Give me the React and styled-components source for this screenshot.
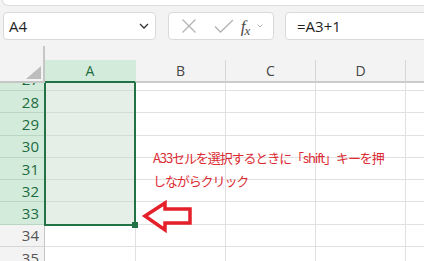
import React from "react";
import styled, { createGlobalStyle } from "styled-components";

const GlobalStyle = createGlobalStyle`
  html, body {
    margin: 0;
    padding: 0;
    background: #f3f3f3;
    overflow: hidden;
    font-family: "Open Sans", "Noto Sans", sans-serif;
  }
`;

const ROW_H = 22.3;
const GREEN = "#217346";

const columns = [
  { name: "A", width: 91 },
  { name: "B", width: 90 },
  { name: "C", width: 90 },
  { name: "D", width: 90 },
  { name: "", width: 60 },
];

const rows = [27, 28, 29, 30, 31, 32, 33, 34, 35];
const isSelected = (n) => n <= 33;

const Page = styled.div`
  width: 424px;
  height: 261px;
  display: flex;
  flex-direction: column;
  overflow: hidden;
`;

const RibbonEdge = styled.div`
  height: 5px;
  margin-left: 2px;
  background: #ffffff;
  border-bottom: 1px solid #dcdcdc;
  border-left: 1px solid #dcdcdc;
  border-bottom-left-radius: 6px;
`;

const FormulaBar = styled.div`
  display: flex;
  align-items: stretch;
  height: 28px;
  margin-top: 6px;
  padding-left: 3px;
  margin-right: -10px;
`;

const Box = styled.div`
  box-sizing: border-box;
  flex-shrink: 0;
  display: flex;
  align-items: center;
  background: #ffffff;
  border: 1px solid #d9d9d9;
  border-radius: 4px;
`;

const NameBox = styled(Box)`
  width: 153px;
  padding: 0 3px 0 5px;
  justify-content: space-between;
  font-size: 15px;
  color: #1f1f1f;
`;

const ButtonsBox = styled(Box)`
  width: 106px;
  margin-left: 12px;
  padding-left: 10px;
`;

const FormulaBox = styled(Box)`
  flex: 1;
  margin-left: 11px;
  padding-left: 11px;
  font-size: 15px;
  color: #1f1f1f;
`;

const IconSlot = styled.span`
  display: flex;
  align-items: center;
  justify-content: center;
  width: ${(p) => p.w}px;
`;

const Fx = styled.span`
  font-family: "Liberation Serif", "DejaVu Serif", serif;
  font-style: italic;
  font-size: 17px;
  color: #4a4a4a;
  letter-spacing: -1px;
  line-height: 1;
  span {
    font-size: 13px;
    position: relative;
    top: 3px;
  }
`;

const HeaderRow = styled.div`
  display: flex;
  margin-top: 6px;
`;

const Corner = styled.div`
  position: relative;
  box-sizing: border-box;
  flex: 0 0 45px;
  height: 37px;
  border-right: 2px solid #c6c6c6;
  border-bottom: 2px solid #c6c6c6;
  svg {
    position: absolute;
    right: 2px;
    bottom: 2px;
  }
`;

const ColHeader = styled.div`
  box-sizing: border-box;
  flex: 0 0 ${(p) => p.w}px;
  height: 23px;
  margin-top: 14px;
  display: flex;
  align-items: center;
  justify-content: center;
  font-size: 14px;
  background: ${(p) => (p.sel ? "#d3ebda" : "#f3f3f3")};
  color: ${(p) => (p.sel ? "#1d6b41" : "#444444")};
  border-right: 1px solid ${(p) => (p.sel ? "#d3ebda" : "#d6d6d6")};
  border-bottom: 2px solid ${(p) => (p.sel ? GREEN : "#cbcbcb")};
`;

const Body = styled.div`
  position: relative;
  flex: 1;
  overflow: hidden;
  background: #ffffff;
`;

const Rows = styled.div`
  margin-top: ${8 - ROW_H}px;
`;

const Row = styled.div`
  display: flex;
  height: ${ROW_H}px;
`;

const RowHeader = styled.div`
  box-sizing: border-box;
  flex: 0 0 45px;
  display: flex;
  align-items: center;
  justify-content: flex-end;
  padding-right: 5px;
  font-size: 15px;
  background: ${(p) => (p.sel ? "#d3ebda" : "#f3f3f3")};
  color: ${(p) => (p.sel ? "#1d6b41" : "#555555")};
  border-bottom: 1px solid ${(p) => (p.sel ? "#b9d6c3" : "#d6d6d6")};
  border-right: 1px solid #c6c6c6;
`;

const Cell = styled.div`
  box-sizing: border-box;
  flex: 0 0 ${(p) => p.w}px;
  background: ${(p) => (p.sel ? "#e5efe8" : "#ffffff")};
  border-right: 1px solid #e1e1e1;
  border-bottom: 1px solid ${(p) => (p.sel ? "#d3ddd6" : "#e1e1e1")};
`;

const Selection = styled.div`
  position: absolute;
  box-sizing: border-box;
  left: 44px;
  top: -10px;
  width: 92px;
  height: 153px;
  border: 2px solid ${GREEN};
  pointer-events: none;
`;

const FillHandle = styled.div`
  position: absolute;
  right: -4px;
  bottom: -4px;
  width: 6px;
  height: 6px;
  background: ${GREEN};
`;

const Note = styled.div`
  position: absolute;
  left: 153px;
  top: 63px;
  font-family: "Noto Sans CJK JP", "Noto Sans", sans-serif;
  font-size: 13px;
  line-height: 23px;
  letter-spacing: -1.1px;
  color: #dc2b33;
  white-space: nowrap;
`;

const Arrow = styled.svg`
  position: absolute;
  left: 138px;
  top: 113px;
`;

const XIcon = () => (
  <svg width="16" height="16" viewBox="0 0 16 16">
    <path d="M1.5 1.5 L14.5 14.5 M14.5 1.5 L1.5 14.5" stroke="#b3b3b3" strokeWidth="1.3" fill="none" />
  </svg>
);

const CheckIcon = () => (
  <svg width="20" height="14" viewBox="0 0 20 14">
    <path d="M1 7.5 L6.5 13 L19 1" stroke="#b3b3b3" strokeWidth="1.3" fill="none" />
  </svg>
);

const Chevron = ({ size = 10, color = "#333" }) => (
  <svg width={size} height={size * 0.6} viewBox="0 0 10 6">
    <path d="M1 1 L5 5 L9 1" stroke={color} strokeWidth="1.3" fill="none" />
  </svg>
);

const App = () => (
  <Page>
    <GlobalStyle />
    <RibbonEdge />
    <FormulaBar>
      <NameBox>
        <span>A4</span>
        <IconSlot w={16}>
          <Chevron />
        </IconSlot>
      </NameBox>
      <ButtonsBox>
        <IconSlot w={20}>
          <XIcon />
        </IconSlot>
        <IconSlot w={14} />
        <IconSlot w={22}>
          <CheckIcon />
        </IconSlot>
        <IconSlot w={20}>
          <Fx>
            f<span>x</span>
          </Fx>
        </IconSlot>
        <IconSlot w={10}>
          <Chevron size={6} color="#9a9a9a" />
        </IconSlot>
      </ButtonsBox>
      <FormulaBox>=A3+1</FormulaBox>
    </FormulaBar>
    <HeaderRow>
      <Corner>
        <svg width="15" height="13" viewBox="0 0 15 13">
          <polygon points="15,0 15,13 0,13" fill="#bdbdbd" />
        </svg>
      </Corner>
      {columns.map((c, i) => (
        <ColHeader key={i} w={c.width} sel={c.name === "A"}>
          {c.name}
        </ColHeader>
      ))}
    </HeaderRow>
    <Body>
      <Rows>
        {rows.map((n) => (
          <Row key={n}>
            <RowHeader sel={isSelected(n)}>{n}</RowHeader>
            {columns.map((c, i) => (
              <Cell key={i} w={c.width} sel={i === 0 && isSelected(n)} />
            ))}
          </Row>
        ))}
      </Rows>
      <Selection>
        <FillHandle />
      </Selection>
      <Note>
        <div>A33セルを選択するときに「shift」キーを押</div>
        <div>しながらクリック</div>
      </Note>
      <Arrow width="60" height="40" viewBox="138 196 60 40">
        <polygon
          points="145,216 165,203 165,209 190,209 190,223 165,223 165,230"
          fill="#ffffff"
          stroke="#e5202a"
          strokeWidth="3.5"
          strokeLinejoin="miter"
        />
      </Arrow>
    </Body>
  </Page>
);

export default App;
